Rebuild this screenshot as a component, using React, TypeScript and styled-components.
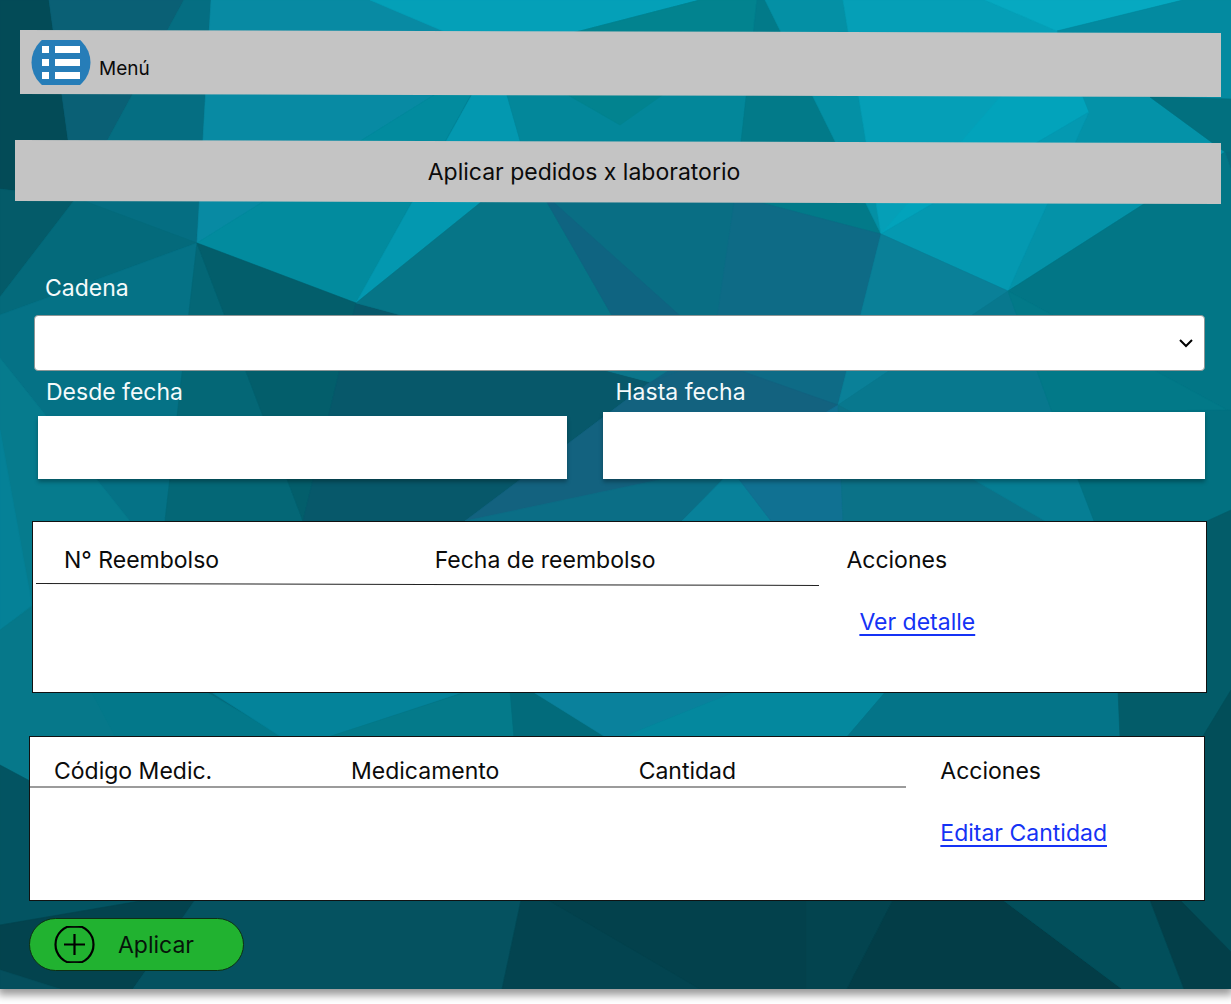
import React from 'react';
import styled, { createGlobalStyle } from 'styled-components';

const GlobalStyle = createGlobalStyle`
  *, *::before, *::after { box-sizing: border-box; }
  body {
    margin: 0;
    background: #fff;
    color: #0b0b0b;
    font-family: Inter, "Liberation Sans", sans-serif;
    font-size: 23px;
    font-weight: 400;
    line-height: 28px;
  }
`;

const Page = styled.div`
  min-height: 100vh;
  overflow: hidden;
  background: #fff;
`;

const Screen = styled.main`
  position: relative;
  display: flex;
  flex-direction: column;
  padding: 30px 10px 18px 15px;
  background: #046b7d;
  box-shadow: 0 4px 8px 2px rgba(0, 0, 0, 0.4);
`;

const Backdrop = styled.svg`
  position: absolute;
  inset: 0;
  width: 100%;
  height: 100%;
`;

const Content = styled.div`
  position: relative;
  display: flex;
  flex-direction: column;
`;

const Bar = styled.header`
  display: flex;
  background: #c4c4c4;
  clip-path: polygon(0 0, 100% 3px, 100% 100%, 0 calc(100% - 3px));
`;

const MenuBar = styled(Bar)`
  height: 67px;
  margin-left: 5px;
  padding: 10px 11px;
`;

const MenuButton = styled.button`
  display: flex;
  align-items: flex-start;
  gap: 8px;
  padding: 0;
  border: 0;
  background: none;
  color: inherit;
  font: inherit;
  font-size: 19px;
  cursor: pointer;

  span { padding-top: 15px; }
`;

const TitleBar = styled(Bar)`
  height: 64px;
  margin-top: 43px;
  align-items: center;
  justify-content: center;
  padding-right: 68px;
`;

const Title = styled.h1`
  margin: 0;
  font-size: 23px;
  font-weight: inherit;
`;

const Form = styled.form`
  display: flex;
  flex-direction: column;
  padding: 70px 16px 0 19px;
`;

const Field = styled.div<{ $indent: number; $gap: number }>`
  display: flex;
  flex-direction: column;
  gap: ${(p) => p.$gap}px;

  label {
    padding-left: ${(p) => p.$indent}px;
    color: #f4fafb;
  }
`;

const SelectWrap = styled.div`
  display: grid;
  align-items: center;

  > * { grid-area: 1 / 1; }
  svg {
    justify-self: end;
    margin-right: 11px;
    pointer-events: none;
  }
`;

const Select = styled.select`
  appearance: none;
  width: 100%;
  height: 56px;
  padding: 0 40px 0 12px;
  border: 1px solid #8c9696;
  border-radius: 4px;
  background: #fff;
  font: inherit;
`;

const DateRow = styled.div`
  display: grid;
  grid-template-columns: 529fr 603fr;
  column-gap: 36px;
  margin-top: 7px;
  padding-left: 4px;
`;

const TextInput = styled.input<{ $height: number }>`
  width: 100%;
  height: ${(p) => p.$height}px;
  padding: 0 12px;
  border: 0;
  background: #fff;
  box-shadow: 0 3px 4px rgba(0, 0, 0, 0.3);
  font: inherit;
`;

const Panel = styled.section<{ $height: number }>`
  position: relative;
  min-height: ${(p) => p.$height}px;
  border: 1px solid #111;
  background: #fff;
`;

const RefundPanel = styled(Panel)`
  margin: 42px 14px 0 17px;

  &::after {
    content: '';
    position: absolute;
    top: 62px;
    left: 3px;
    width: calc(66.8% - 1px);
    border-top: 1px solid #222;
    transform: rotate(0.13deg);
  }
`;

const MedicinePanel = styled(Panel)`
  margin: 43px 16px 0 14px;

  &::after {
    content: '';
    position: absolute;
    top: 49px;
    left: 0;
    width: 74.6%;
    border-top: 2px solid #9b9b9b;
  }
`;

const Table = styled.table<{ $indent: number; $top: number; $rowTop: number }>`
  width: 100%;
  table-layout: fixed;
  border-collapse: collapse;

  th, td {
    padding: 0 0 0 ${(p) => p.$indent}px;
    text-align: left;
    font-weight: inherit;
    vertical-align: top;
  }
  th { padding-top: ${(p) => p.$top}px; }
  td { padding-top: ${(p) => p.$rowTop}px; }
`;

const Col = styled.col<{ $share?: number }>`
  width: ${(p) => (p.$share ? `${p.$share}%` : 'auto')};
`;

const ActionLink = styled.a<{ $inset?: boolean }>`
  margin-left: ${(p) => (p.$inset ? 13 : 0)}px;
  color: #1533f5;
  text-decoration: underline;
  text-decoration-thickness: 2px;
  text-underline-offset: 4px;
  text-decoration-skip-ink: none;
`;

const ApplyButton = styled.button`
  display: flex;
  align-items: center;
  align-self: flex-start;
  gap: 23px;
  height: 53px;
  margin: 17px 0 0 14px;
  padding: 0 49px 0 24px;
  border: 1px solid #0c2f14;
  border-radius: 27px;
  background: #21b230;
  color: #06140a;
  font: inherit;
  cursor: pointer;
`;

const facets: [string, string][] = [
  ['#034b57', '0,0 49,0 76,198 0,189'],
  ['#0a6075', '49,0 184,0 76,198'],
  ['#056e82', '184,0 211,0 197,243 76,198'],
  ['#088aa3', '211,0 370,0 475,40 490,60 197,243'],
  ['#028b9e', '197,243 490,60 356,303'],
  ['#0398b0', '495,53 527,165 356,303'],
  ['#04a0b8', '370,0 700,0 495,53'],
  ['#03879a', '700,0 757,0 735,196 527,165 495,53'],
  ['#02838f', '700,0 757,0 753,31 620,125 495,53'],
  ['#027a89', '757,0 765,0 881,234 735,196'],
  ['#0490a5', '765,0 843,0 881,234'],
  ['#059fb7', '843,0 985,0 1057,31 1089,112 881,234'],
  ['#02a3bb', '1015,80 1083,97 1089,112 881,234'],
  ['#06a9c1', '985,0 1183,0 1057,31'],
  ['#038aa0', '1183,0 1231,0 1231,99 1150,97 1057,31'],
  ['#0492a8', '1057,31 1150,97 1225,152 1008,291 1089,112'],
  ['#0499b1', '881,234 1089,112 1008,291'],
  ['#02707f', '1150,97 1231,99 1231,152 1225,152'],
  ['#027686', '1225,152 1231,170 1231,412 1008,291'],
  ['#045b69', '0,189 76,198 0,297'],
  ['#046a7b', '76,198 197,243 0,315 0,297'],
  ['#057286', '197,243 165,521 130,521 0,358 0,315'],
  ['#046776', '197,243 303,521 165,521'],
  ['#035e6b', '197,243 356,303 303,521'],
  ['#07586a', '356,303 650,382 465,521 303,521'],
  ['#067587', '527,165 540,190 650,382 356,303'],
  ['#096e84', '527,165 735,196 712,371 540,190'],
  ['#0f6481', '540,190 735,365 650,382'],
  ['#0e6b86', '735,196 881,234 838,405 710,365'],
  ['#0a8098', '881,234 1008,291 838,405'],
  ['#08788e', '1008,291 1052,412 975,478 838,405'],
  ['#027988', '1008,291 1231,412 1231,510 1052,412'],
  ['#13627f', '650,382 710,360 838,405 730,478 465,521'],
  ['#0b758a', '600,369 670,369 650,382'],
  ['#0b6e86', '465,521 668,478 735,466 683,521'],
  ['#08819a', '732,470 771,521 682,521'],
  ['#107192', '732,470 838,405 843,521 771,521'],
  ['#0b7288', '838,405 975,478 1045,521 843,521'],
  ['#067e94', '940,460 1075,460 1094,521 1045,521'],
  ['#027181', '1052,412 1231,410 1231,515 1210,521 1094,521'],
  ['#067b8d', '0,358 130,521 130,693 0,693'],
  ['#058197', '0,430 32,605 0,630'],
  ['#06788a', '0,630 32,607 92,693 116,736 116,830 0,765'],
  ['#03788a', '92,693 208,693 285,738 116,738'],
  ['#04839a', '208,690 470,690 325,738 283,738'],
  ['#047a8a', '325,738 470,691 510,691 514,738'],
  ['#026b7b', '510,690 530,690 607,738 514,738'],
  ['#0a819c', '530,690 740,690 620,738 607,738'],
  ['#04889e', '740,690 887,690 846,738 620,738'],
  ['#047488', '887,690 1118,690 1120,738 846,738'],
  ['#035c69', '1118,690 1207,521 1231,510 1231,690 1203,738 1120,738'],
  ['#024e59', '1231,690 1231,989 1180,901 1203,736'],
  ['#035462', '0,765 60,797 195,901 0,925'],
  ['#03434e', '0,925 140,901 195,901 133,989 0,989'],
  ['#054f5d', '0,970 60,989 0,989'],
  ['#055260', '195,900 521,900 502,989 133,989'],
  ['#034450', '521,900 806,900 806,989 502,989'],
  ['#03414c', '548,900 806,900 806,989 700,989'],
  ['#03444f', '806,900 893,900 847,989 806,989'],
  ['#033d47', '893,900 1003,900 1122,989 847,989'],
  ['#024f5b', '1003,900 1150,900 1184,989 1122,989'],
  ['#033f49', '1150,900 1180,900 1231,952 1231,989 1184,989'],
];

function FacetBackdrop() {
  return (
    <Backdrop viewBox="0 0 1231 989" preserveAspectRatio="none" aria-hidden="true">
      {facets.map(([color, points]) => (
        <polygon key={points} points={points} fill={color} stroke={color} strokeWidth="0.6" />
      ))}
    </Backdrop>
  );
}

function ListIcon() {
  return (
    <svg width="60" height="45" viewBox="0 0 60 45" aria-hidden="true">
      <circle cx="30" cy="22.5" r="29.5" fill="#267db8" />
      <path
        fill="#fff"
        d="M11 6h7v7h-7zM24 6h25v7H24zM11 19h7v7h-7zM24 19h25v7H24zM11 32h7v7h-7zM24 32h25v7H24z"
      />
    </svg>
  );
}

function PlusIcon() {
  return (
    <svg width="41" height="37" viewBox="0 0 41 37" fill="none" stroke="#000" aria-hidden="true">
      <circle cx="20.5" cy="18.5" r="19" strokeWidth="2.2" />
      <path d="M10 18.5h21M20.5 8v21" strokeWidth="2.2" />
      <path d="M13.5 1h14M13.5 36h14" strokeWidth="1.4" />
    </svg>
  );
}

function ChevronIcon() {
  return (
    <svg width="16" height="10" viewBox="0 0 16 10" fill="none" stroke="#000" aria-hidden="true">
      <path d="M2 2l6 6 6-6" strokeWidth="2" />
    </svg>
  );
}

export default function App() {
  return (
    <Page>
      <GlobalStyle />
      <Screen>
        <FacetBackdrop />
        <Content>
          <MenuBar>
            <MenuButton type="button">
              <ListIcon />
              <span>Menú</span>
            </MenuButton>
          </MenuBar>
          <TitleBar>
            <Title>Aplicar pedidos x laboratorio</Title>
          </TitleBar>

          <Form>
            <Field $indent={11} $gap={13}>
              <label htmlFor="cadena">Cadena</label>
              <SelectWrap>
                <Select id="cadena" defaultValue="">
                  <option value="" />
                </Select>
                <ChevronIcon />
              </SelectWrap>
            </Field>
            <DateRow>
              <Field $indent={8} $gap={10}>
                <label htmlFor="desde">Desde fecha</label>
                <TextInput id="desde" type="text" $height={63} />
              </Field>
              <Field $indent={13} $gap={6}>
                <label htmlFor="hasta">Hasta fecha</label>
                <TextInput id="hasta" type="text" $height={67} />
              </Field>
            </DateRow>
          </Form>

          <RefundPanel $height={172}>
            <Table $indent={31} $top={24} $rowTop={34}>
              <colgroup>
                <Col $share={31.6} />
                <Col $share={35.1} />
                <Col />
              </colgroup>
              <thead>
                <tr>
                  <th scope="col">N° Reembolso</th>
                  <th scope="col">Fecha de reembolso</th>
                  <th scope="col">Acciones</th>
                </tr>
              </thead>
              <tbody>
                <tr>
                  <td />
                  <td />
                  <td><ActionLink href="#detalle" $inset>Ver detalle</ActionLink></td>
                </tr>
              </tbody>
            </Table>
          </RefundPanel>

          <MedicinePanel $height={165}>
            <Table $indent={24} $top={20} $rowTop={34}>
              <colgroup>
                <Col $share={25.3} />
                <Col $share={24.5} />
                <Col $share={25.7} />
                <Col />
              </colgroup>
              <thead>
                <tr>
                  <th scope="col">Código Medic.</th>
                  <th scope="col">Medicamento</th>
                  <th scope="col">Cantidad</th>
                  <th scope="col">Acciones</th>
                </tr>
              </thead>
              <tbody>
                <tr>
                  <td />
                  <td />
                  <td />
                  <td><ActionLink href="#cantidad">Editar Cantidad</ActionLink></td>
                </tr>
              </tbody>
            </Table>
          </MedicinePanel>

          <ApplyButton type="button">
            <PlusIcon />
            Aplicar
          </ApplyButton>
        </Content>
      </Screen>
    </Page>
  );
}
